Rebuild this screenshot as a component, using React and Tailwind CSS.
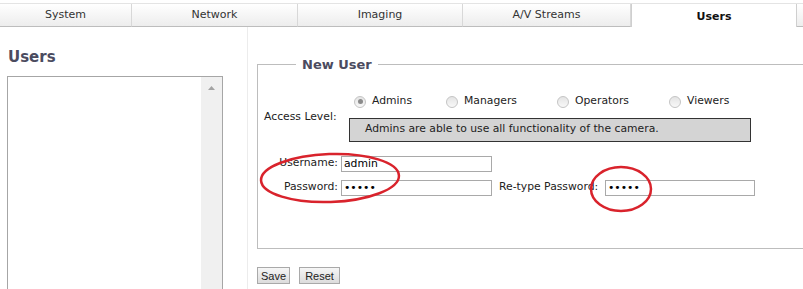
import React from 'react';

const tabs = [
  { name: 'System', w: 'w-[132px]' },
  { name: 'Network', w: 'w-[166px]' },
  { name: 'Imaging', w: 'w-[165px]' },
  { name: 'A/V Streams', w: 'w-[168px]' },
  { name: 'Users', w: 'w-[166px]', active: true },
];

const levels = [
  { name: 'Admins', w: 'w-[92px]', checked: true },
  { name: 'Managers', w: 'w-[111px]' },
  { name: 'Operators', w: 'w-[112px]' },
  { name: 'Viewers', w: 'w-[80px]' },
];

const Radio = ({ checked }) => (
  <span className="w-[12px] h-[12px] shrink-0 rounded-full border border-[#c4c4c4] bg-gradient-to-b from-[#e4e4e4] to-[#f8f8f8] flex items-center justify-center">
    {checked && <span className="w-[5px] h-[5px] rounded-full bg-[#8a8a8a]" />}
  </span>
);

const Input = ({ value, w = 'w-[151px]' }) => (
  <div className={`${w} h-[16px] border border-[#a9a9a9] bg-white text-[10.8px] leading-[14px] pl-[2px] text-black`}>
    {value}
  </div>
);

export default function App() {
  return (
    <div className="relative w-[803px] h-[289px] overflow-hidden bg-white text-[#222] text-[10.8px] font-['DejaVu_Sans',Verdana,sans-serif]">
      {/* tab bar */}
      <div className="mt-[3px] flex h-[24px] border-t border-[#e4e4e4]">
        {tabs.map((t) => (
          <div
            key={t.name}
            className={`${t.w} shrink-0 flex items-center justify-center text-[11px] pt-[1px] ${
              t.active
                ? 'bg-white font-bold text-[#111] border-l border-r border-[#cfcfcf] pt-[3px]'
                : 'bg-gradient-to-b from-white to-[#ededed] border-b border-[#bdbdbd] border-r border-r-[#d8d8d8] text-[#333]'
            }`}
          >
            {t.name}
          </div>
        ))}
        <div className="flex-1 bg-gradient-to-b from-white to-[#ededed] border-b border-[#bdbdbd]" />
      </div>

      <div className="flex h-[262px]">
        {/* left column */}
        <div className="w-[248px] shrink-0 border-r border-[#ececec] pt-[21px] pl-[7px]">
          <div className="text-[15px] font-bold text-[#4b4b5f] leading-[18px] ml-[1px]">Users</div>
          <div className="mt-[10px] w-[216px] h-[230px] border border-[#a6a6a6] border-b-0 flex">
            <div className="flex-1 bg-white" />
            <div className="w-[21px] bg-[#f0f0f0] flex justify-center pt-[9px]">
              <svg width="7" height="4" viewBox="0 0 7 4">
                <path d="M0 4 L3.5 0 L7 4 Z" fill="#a3a3a3" />
              </svg>
            </div>
          </div>
        </div>

        {/* right column */}
        <div className="flex-1 pl-[9px] pt-[28px]">
          <fieldset className="border border-[#bdbdbd] border-r-0 h-[194px] pl-[6px] pt-0">
            <legend className="ml-[32px] px-[6px] text-[13px] font-bold text-[#4b4b5f]">New User</legend>
            <div className="flex mt-[19px]">
              <div className="w-[85px] pt-[15px]">Access Level:</div>
              <div className="flex flex-col">
                <div className="flex items-center h-[16px] pl-[5px]">
                  {levels.map((l) => (
                    <div key={l.name} className={`${l.w} flex items-center gap-[6px]`}>
                      <Radio checked={l.checked} />
                      <span>{l.name}</span>
                    </div>
                  ))}
                </div>
                <div className="mt-[8px] w-[402px] h-[24px] bg-[#d4d4d4] border border-[#333] pl-[15px] flex items-center">
                  Admins are able to use all functionality of the camera.
                </div>
              </div>
            </div>
            <div className="mt-[14px] flex flex-col gap-[8px]">
              <div className="flex items-center h-[16px]">
                <span className="w-[77px] text-right pr-[3px]">Username:</span>
                <Input value="admin" w="w-[151px]" />
              </div>
              <div className="flex items-center h-[16px]">
                <span className="w-[77px] text-right pr-[3px]">Password:</span>
                <Input value="•••••" w="w-[151px]" />
                <span className="ml-[7px] w-[106px]">Re-type Password:</span>
                <Input value="•••••" w="w-[150px]" />
              </div>
            </div>
          </fieldset>
          <div className="mt-[18px] flex gap-[9px]">
            <button className="h-[17px] w-[33px] border border-[#a9a9a9] bg-gradient-to-b from-[#f6f6f6] to-[#dcdcdc] text-[11px] leading-[14px] font-['Liberation_Sans',Arial,sans-serif]">
              Save
            </button>
            <button className="h-[17px] w-[41px] border border-[#a9a9a9] bg-gradient-to-b from-[#f6f6f6] to-[#dcdcdc] text-[11px] leading-[14px] font-['Liberation_Sans',Arial,sans-serif]">
              Reset
            </button>
          </div>
        </div>
      </div>

      {/* hand-drawn red annotations */}
      <svg className="absolute left-0 top-0 pointer-events-none" width="803" height="289">
        <ellipse cx="330" cy="178" rx="69" ry="24" fill="none" stroke="#d9232c" strokeWidth="2.5" transform="rotate(-2 330 178)" />
        <ellipse cx="621" cy="189" rx="30" ry="22" fill="none" stroke="#d9232c" strokeWidth="2.5" />
      </svg>
    </div>
  );
}
